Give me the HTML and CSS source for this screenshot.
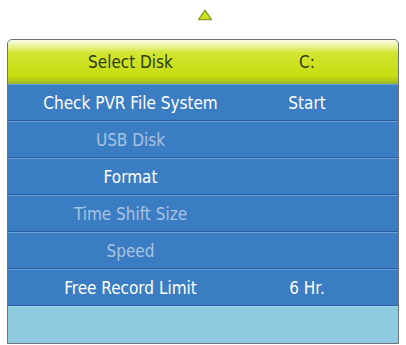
FILE: index.html
```html
<!DOCTYPE html>
<html>
<head>
<meta charset="utf-8">
<link rel="stylesheet" href="styles.css">
</head>
<body>
<div class="top">
  <svg class="tri" width="16" height="12" viewBox="0 0 16 12"><path d="M8 1.2 L14.6 10.6 L1.4 10.6 Z" fill="#c9e21a" stroke="#8a9a30" stroke-width="1.2" stroke-linejoin="round"/></svg>
</div>
<div class="menu">
  <div class="row head"><span class="l">Select Disk</span><span class="r">C:</span></div>
  <div class="row"><span class="l">Check PVR File System</span><span class="r">Start</span></div>
  <div class="row dim"><span class="l">USB Disk</span><span class="r"></span></div>
  <div class="row"><span class="l">Format</span><span class="r"></span></div>
  <div class="row dim"><span class="l">Time Shift Size</span><span class="r"></span></div>
  <div class="row dim"><span class="l">Speed</span><span class="r"></span></div>
  <div class="row"><span class="l">Free Record Limit</span><span class="r">6 Hr.</span></div>
  <div class="foot"></div>
</div>
</body>
</html>
```
FILE: styles.css
```css
html, body { margin: 0; padding: 0; background: #fff; }
body { width: 406px; height: 345px; overflow: hidden; font-family: "DejaVu Sans Condensed", "DejaVu Sans", sans-serif; }
.top { height: 39px; display: flex; justify-content: center; align-items: flex-start; }
.tri { margin-top: 9px; margin-left: 4px; }
.menu { margin-left: 7px; width: 390px; border: 1px solid #6d737a; border-radius: 5px 5px 0 0; overflow: hidden; background: #3b7dc3; }
.row { display: grid; grid-template-columns: 245px 108px 1fr; height: 37px; align-items: center; font-size: 17px; color: #fff; background: #3b7dc3; border-top: 1px solid #6a9fd6; border-bottom: 1px solid #2b5e9c; box-sizing: border-box; }
.row .l, .row .r { text-align: center; white-space: nowrap; }
.row.dim { color: #a9c3e0; }
.head { height: 44px; border: none; color: #2e3a10; background: linear-gradient(#f8fbe6 0px, #eaf49a 6px, #d2e530 13px, #c6dd10 36px, #a9c320 42px, #8fae3a 44px); }
.foot { height: 36px; background: #8ecbe0; border-top: 1px solid #9fd6ea; }
```
